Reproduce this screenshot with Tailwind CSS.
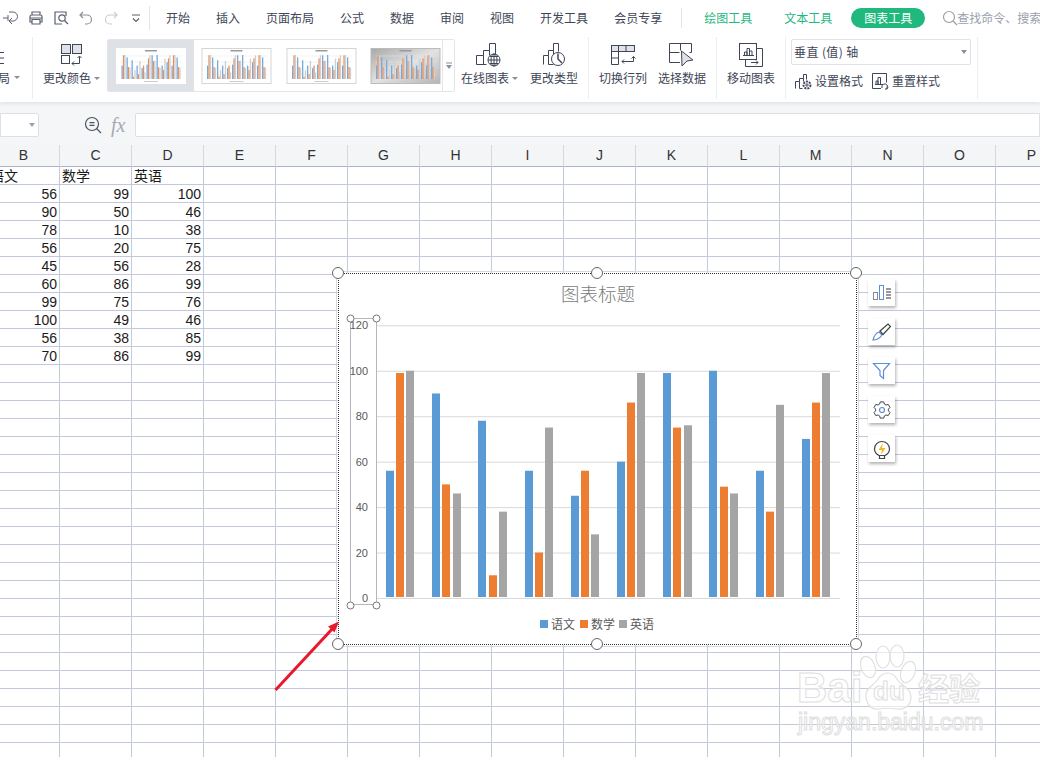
<!DOCTYPE html>
<html lang="zh-CN">
<head>
    <meta charset="UTF-8">
    <title>表格图表工具</title>
    <script src="https://cdn.jsdelivr.net/npm/@tailwindcss/browser@4"></script>
</head>
<body class="relative w-[1040px] h-[757px] overflow-hidden bg-white text-[#3e4657] font-['Noto_Sans_CJK_SC','Noto_Sans',sans-serif]">

    <!-- Tab row -->
    <div class="h-[35px] flex items-center pl-[3px] text-[12px] bg-white whitespace-nowrap">
        <div class="flex gap-[9px] items-center shrink-0">
            <svg class="w-[16px] h-[16px]" viewBox="0 0 16 16" fill="none" stroke="#5a6070"><path d="M6 2h4a4 4 0 0 1 0 9H7M9 8l-3 3 3 3M0 8h5M5 5v6"/></svg>
            <svg class="w-[16px] h-[16px]" viewBox="0 0 16 16" fill="none" stroke="#5a6070" stroke-width="1.2"><path d="M4 5V2h8v3M4 12H2V6.500A1.500 1.500 0 0 1 3.500 5h9A1.500 1.500 0 0 1 14 6.500V12h-2M4 9.500h8V14H4zM2 8h12"/></svg>
            <svg class="w-[16px] h-[16px]" viewBox="0 0 16 16" fill="none" stroke="#5a6070" stroke-width="1.2"><path d="M13 6V2H2v12h7"/><circle cx="9" cy="8" r="3.2"/><path d="M11.500 10.500 15 14"/></svg>
            <svg class="w-[16px] h-[16px]" viewBox="0 0 16 16" fill="none" stroke="#8a8f9a" stroke-width="1.2"><path d="M5 2 2 5l3 3M2 5h7a4 4 0 0 1 0 9H7"/></svg>
            <svg class="w-[16px] h-[16px]" viewBox="0 0 16 16" fill="none" stroke="#c8cbd2" stroke-width="1.2"><path d="m11 2 3 3-3 3M14 5H7a4 4 0 0 0 0 9h2"/></svg>
            <svg class="w-[16px] h-[16px]" viewBox="0 0 16 16" fill="none" stroke="#5a6070" stroke-width="1.2"><path d="M4 5h8M5 8.500l3 3 3-3"/></svg>
        </div>
        <div class="ml-[5px] w-px h-[24px] bg-[#e2e4e8] shrink-0"></div>
        <div class="ml-[16px] flex gap-[26px] text-[#3e4657] shrink-0">
            <span>开始</span><span>插入</span><span>页面布局</span><span>公式</span><span>数据</span><span>审阅</span><span>视图</span><span>开发工具</span><span>会员专享</span>
        </div>
        <div class="ml-[19px] w-px h-[20px] bg-[#e2e4e8] shrink-0"></div>
        <span class="ml-[22px] text-[#1fb97e] shrink-0">绘图工具</span>
        <span class="ml-[32px] text-[#1fb97e] shrink-0">文本工具</span>
        <span class="ml-[19px] w-[74px] h-[20px] rounded-full bg-[#1fb97e] text-white flex items-center justify-center shrink-0">图表工具</span>
        <svg class="ml-[17px] w-[16px] h-[16px] shrink-0" viewBox="0 0 16 16" fill="none" stroke="#9aa0ac" stroke-width="1.2"><circle cx="7" cy="7" r="5.500"/><path d="m11 11 4 4"/></svg>
        <span class="ml-[-1px] text-[#9aa0ac]">查找命令、搜索</span>
    </div>

    <!-- Ribbon -->
    <div class="relative z-10 h-[67px] flex bg-white text-[12px] shadow-[0_2px_4px_rgba(0,0,0,0.08)] whitespace-nowrap">
        <div class="w-[33px] relative border-r border-[#eceef1] mt-[2px] h-[62px]">
            <svg class="absolute left-0 top-[15px] w-[4px] h-[12px]" viewBox="0 0 4 12" stroke="#3e4657"><path d="M0 .5h4M0 6h4M0 11.500h4"/></svg>
            <span class="absolute left-[-2px] top-[33px] leading-[16px]">局</span>
            <span class="absolute left-[14px] top-[39px] border-x-[3px] border-x-transparent border-t-[3px] border-t-[#8a8f9a]"></span>
        </div>

        <div class="ml-[10px] w-[48px] pt-[5px] flex flex-col items-center relative">
            <svg class="w-[28px] h-[28px] translate-x-[4px]" viewBox="0 0 28 28" fill="none" stroke="#3e4657"><rect x="4.500" y="4.500" width="9" height="9" fill="#dfe2e7"/><rect x="15.500" y="4.500" width="9" height="9" fill="#dfe2e7"/><rect x="4.500" y="15.500" width="8" height="8"/><path d="M15 23.500h7.500v-7M20.500 18l2-2 2 2M15 23.500l2-2M15 23.500l2 2"/></svg>
            <span class="mt-[2px] leading-[16px]">更改颜色</span>
            <span class="absolute left-[51px] top-[42px] border-x-[3px] border-x-transparent border-t-[3px] border-t-[#8a8f9a]"></span>
        </div>

        <!-- Style gallery -->
        <div class="ml-[16px] mt-[4px] w-[348px] h-[53px] flex border border-[#e3e5e9] rounded-[2px]">
            <div class="w-[86px] bg-[#dee1e5] flex items-center justify-center"><svg data-thumb="0" class="w-[70px] h-[36px]" viewBox="0 0 70 36"></svg></div>
            <div class="w-[85px] flex items-center justify-center"><svg data-thumb="1" class="w-[71px] h-[36px]" viewBox="0 0 70 36"></svg></div>
            <div class="w-[85px] flex items-center justify-center"><svg data-thumb="2" class="w-[71px] h-[36px]" viewBox="0 0 70 36"></svg></div>
            <div class="w-[78px] flex items-center pl-[6px]"><svg data-thumb="3" class="w-[71px] h-[36px]" viewBox="0 0 70 36"></svg></div>
            <div class="flex-1 border-l border-[#e3e5e9] flex items-center justify-center">
                <svg class="w-[8px] h-[8px]" viewBox="0 0 8 8"><path d="M1 1h6" stroke="#8a8f9a"/><path d="M1 3h6L4 7z" fill="#8a8f9a"/></svg>
            </div>
        </div>

        <div class="ml-[6px] w-[48px] pt-[5px] flex flex-col items-center relative">
            <svg class="w-[28px] h-[28px] translate-x-[3px]" viewBox="0 0 28 28" fill="none" stroke="#3e4657"><path d="M2.500 24.500v-9h7v9M9.500 15.500v-5h6v5M15.500 10.500v-7h6v12"/><path d="M2.500 24.500h10"/><circle cx="20" cy="20" r="6" fill="#fff"/><path d="M14 20h12M20 14v12M16 16.500h8M16 23.500h8"/><ellipse cx="20" cy="20" rx="3" ry="6"/></svg>
            <span class="mt-[2px] leading-[16px]">在线图表</span>
            <span class="absolute left-[51px] top-[42px] border-x-[3px] border-x-transparent border-t-[3px] border-t-[#8a8f9a]"></span>
        </div>
        <div class="ml-[21px] w-[48px] pt-[5px] flex flex-col items-center">
            <svg class="w-[28px] h-[28px]" viewBox="0 0 28 28" fill="none" stroke="#3e4657"><path d="M3.500 24.500v-9h5v9h5M8.500 15.500v-5h5v5M13.500 10.500v-7h5v8"/><circle cx="18" cy="19" r="6.500" fill="#fff"/><path d="M18 13.500V19l4 4" stroke-width="1.500"/></svg>
            <span class="mt-[2px] leading-[16px]">更改类型</span>
        </div>
        <div class="ml-[10px] mt-[2px] w-px h-[62px] bg-[#eceef1]"></div>

        <div class="ml-[10px] w-[48px] pt-[5px] flex flex-col items-center">
            <svg class="w-[28px] h-[28px]" viewBox="0 0 28 28" fill="none" stroke="#3e4657"><rect x="2.500" y="5.500" width="23" height="6" fill="#dfe2e7"/><path d="M2.500 5.500v19h7v-19M2.500 11.500h7M2.500 18h7M17 5.500v6M25.500 11.500v-6"/><path d="M13 21.500h11.500v-5M22.500 18.500l2-2 2 2M13 21.500l2-2M13 21.500l2 2"/></svg>
            <span class="mt-[2px] leading-[16px]">切换行列</span>
        </div>
        <div class="ml-[11px] w-[48px] pt-[5px] flex flex-col items-center">
            <svg class="w-[28px] h-[28px]" viewBox="0 0 28 28" fill="none" stroke="#3e4657"><path d="M12 22.500H1.500v-19h22v9M1.500 12.500h10M12.500 3.500v7M23.500 12.500h-2"/><path d="m13.500 11 11.500 9-6 1-5 5z" fill="#dfe2e7"/></svg>
            <span class="mt-[2px] leading-[16px]">选择数据</span>
        </div>
        <div class="ml-[10px] mt-[2px] w-px h-[62px] bg-[#eceef1]"></div>

        <div class="ml-[10px] w-[48px] pt-[5px] flex flex-col items-center">
            <svg class="w-[28px] h-[28px]" viewBox="0 0 28 28" fill="none" stroke="#3e4657"><rect x="2.500" y="3.500" width="17" height="16"/><path d="M19.500 8.500h6v18h-17v-7"/><path d="M6 15.500h11M7.500 15v-3h2.500v3M10 15V8.500h2.500V15M12.500 15v-4H15v4"/><path d="M14 22.500h7M19 20.500l2 2-2 2"/></svg>
            <span class="mt-[2px] leading-[16px]">移动图表</span>
        </div>
        <div class="ml-[10px] mt-[2px] w-px h-[62px] bg-[#eceef1]"></div>

        <div class="ml-[5px] w-[180px] pt-[4px] flex flex-col">
            <div class="h-[26px] border border-[#dfe2e7] rounded-[2px] flex items-center pl-[2px] pr-[3px] justify-between text-[#3e4657]">
                <span class="tracking-[0.4px]">垂直 (值) 轴</span>
                <span class="border-x-[3px] border-x-transparent border-t-[4px] border-t-[#8a8f9a]"></span>
            </div>
            <div class="mt-[8px] flex items-center h-[16px] pl-[3px]">
                <svg class="w-[18px] h-[18px] shrink-0" viewBox="0 0 18 18" fill="none" stroke="#3e4657"><path d="M1.500 16.500v-7h4v7h3M5.500 9.500v-3h4v3M9.500 6.500v-4h3v5"/><circle cx="13" cy="13" r="3.500" stroke-width="2" stroke-dasharray="2 1"/><circle cx="13" cy="13" r="1.200"/></svg>
                <span class="ml-[3px]">设置格式</span>
                <svg class="ml-[8px] w-[18px] h-[18px] shrink-0" viewBox="0 0 18 18" fill="none" stroke="#3e4657"><path d="M10 16.500H1.500v-15h14v9"/><path d="M4 12.500h8M5 12V9h2v3M7 12V5.500h2.500V12"/><path d="M11 16a3 3 0 1 1 5 1M16 14.500V17h-2"/></svg>
                <span class="ml-[3px]">重置样式</span>
            </div>
        </div>
        <div class="ml-[6px] mt-[2px] w-px h-[62px] bg-[#eceef1]"></div>
    </div>

    <!-- Formula bar -->
    <div class="h-[43px] bg-[#f5f6f8] flex items-center pt-[3px]">
        <div class="w-[39px] h-[24px] bg-white border border-[#dcdfe5] rounded-r-[2px] flex items-center justify-end pr-[3px] shrink-0">
            <span class="border-x-[3px] border-x-transparent border-t-[4px] border-t-[#9aa0ac]"></span>
        </div>
        <svg class="ml-[45px] w-[18px] h-[18px] shrink-0" viewBox="0 0 18 18" fill="none" stroke="#4b5262" stroke-width="1.200"><circle cx="8" cy="8" r="6.500"/><path d="m12.500 12.500 4.500 4.500M5.500 6.700h5M5.500 9.300h5"/></svg>
        <span class="ml-[9px] w-[16px] text-[20px] leading-none font-['Liberation_Serif',serif] italic text-[#a5a9b3] shrink-0">fx</span>
        <div class="ml-[8px] flex-1 h-[24px] bg-white border border-[#dcdfe5] rounded-l-[2px]"></div>
    </div>

    <!-- Sheet, filled in below -->
    <div id="sheet" class="-ml-[12px] w-[1100px] font-['Liberation_Sans','Noto_Sans_CJK_SC',sans-serif] text-[14px] text-[#1a1a1a]"></div>

    <!-- Chart object -->
    <div class="absolute left-[338px] top-[273px] w-[519px] h-[372px] bg-white border border-dotted border-[#333] outline outline-1 outline-offset-[1px] outline-[#d6d8de]">
        <svg id="chart" class="w-full h-full" viewBox="339 274 517 370"></svg>
    </div>
    <!-- Selection handles -->
    <span class="absolute left-[332px] top-[267px] w-[12px] h-[12px] rounded-full bg-white border border-[#666]"></span>
    <span class="absolute left-[591px] top-[267px] w-[12px] h-[12px] rounded-full bg-white border border-[#666]"></span>
    <span class="absolute left-[850px] top-[267px] w-[12px] h-[12px] rounded-full bg-white border border-[#666]"></span>
    <span class="absolute left-[332px] top-[638px] w-[12px] h-[12px] rounded-full bg-white border border-[#666]"></span>
    <span class="absolute left-[591px] top-[638px] w-[12px] h-[12px] rounded-full bg-white border border-[#666]"></span>
    <span class="absolute left-[850px] top-[638px] w-[12px] h-[12px] rounded-full bg-white border border-[#666]"></span>

    <!-- Floating chart buttons -->
    <div class="absolute left-[868px] top-[279px] flex flex-col gap-[12px]">
        <div class="w-[27px] h-[27px] bg-white shadow-[1px_2px_3px_rgba(0,0,0,0.3)] flex items-center justify-center">
            <svg class="w-[20px] h-[20px]" viewBox="0 0 20 20" fill="none"><rect x="1.500" y="9.500" width="4" height="7" stroke="#8a8a8a"/><rect x="7.500" y="2.500" width="4" height="14" stroke="#5b8fd9"/><path d="M14 6h5M14 9h5M14 12h5M14 15h5" stroke="#333"/></svg>
        </div>
        <div class="w-[27px] h-[27px] bg-white shadow-[1px_2px_3px_rgba(0,0,0,0.3)] flex items-center justify-center">
            <svg class="w-[20px] h-[20px]" viewBox="0 0 20 20" fill="none"><path d="M1 18c1-4 3-7 6-8l3 3c-2 3-5 5-9 5z" stroke="#5b8fd9" stroke-width="1.200"/><path d="m8 9 8-7 2.500 2.500-7.500 8z" stroke="#444" stroke-width="1.200"/></svg>
        </div>
        <div class="w-[27px] h-[27px] bg-white shadow-[1px_2px_3px_rgba(0,0,0,0.3)] flex items-center justify-center">
            <svg class="w-[20px] h-[20px]" viewBox="0 0 20 20" fill="none"><path d="M1.500 2.500h16l-6 7v8l-3.500-3v-5z" stroke="#5b8fd9" stroke-width="1.200"/></svg>
        </div>
        <div class="w-[27px] h-[27px] bg-white shadow-[1px_2px_3px_rgba(0,0,0,0.3)] flex items-center justify-center">
            <svg class="w-[20px] h-[20px]" viewBox="0 0 20 20" fill="none"><path d="M8 0h4l.6 2.400 1.900 1.100 2.400-.7 2 3.400-1.800 1.800v2l1.800 1.800-2 3.400-2.400-.7-1.900 1.100L12 18H8l-.6-2.400-1.900-1.100-2.400.7-2-3.400 1.800-1.800v-2L1.100 6.200l2-3.400 2.400.7 1.900-1.100z" transform="translate(1 1.900) scale(.9)" stroke="#444" stroke-width="1.100"/><circle cx="10" cy="10" r="2.500" stroke="#5b8fd9" stroke-width="1.200"/></svg>
        </div>
        <div class="w-[27px] h-[27px] bg-white shadow-[1px_2px_3px_rgba(0,0,0,0.3)] flex items-center justify-center">
            <svg class="w-[20px] h-[20px]" viewBox="0 0 20 20" fill="none"><path d="M7 16.500C4 15 2.500 12.800 2.500 10a7.500 7.500 0 0 1 15 0c0 2.800-1.500 5-4.500 6.500z" stroke="#444" stroke-width="1.200"/><path d="M7.500 17v2.500h5V17" stroke="#444" stroke-width="1.200"/><path d="M11 4 6.500 11H10l-1 5 4.500-7H10z" fill="#f5b921"/></svg>
        </div>
    </div>

    <!-- Red arrow -->
    <svg class="absolute left-[270px] top-[615px] w-[75px] h-[80px]" viewBox="270 615 75 80" fill="none">
        <path d="M275.500 690 334 627" stroke="#e8192c" stroke-width="3"/>
        <path d="m339 621.500-11 5 6.500 6z" fill="#e8192c"/>
    </svg>

    <!-- Watermark -->
    <div class="absolute left-[796px] top-[640px] w-[200px] h-[100px] pointer-events-none">
        <svg class="absolute left-0 top-0 w-[200px] h-[100px]" viewBox="796 640 200 100" fill="#ffffff99" stroke="#e0e0e0" stroke-width="1.200">
            <ellipse cx="868" cy="667" rx="7" ry="11" transform="rotate(-20 868 667)"/>
            <ellipse cx="883" cy="657" rx="7" ry="11"/>
            <ellipse cx="897" cy="656" rx="7" ry="11"/>
            <ellipse cx="908" cy="672" rx="7" ry="11" transform="rotate(20 908 672)"/>
            <path d="M866 695c0-8 8-9 12-16 5-8 14-8 19 0 4 7 14 9 14 18 0 9-7 13-14 12-6-1-12-1-18 0-8 1-13-5-13-14z"/>
        </svg>
        <span class="absolute left-[1px] top-[28px] text-[42px] leading-[40px] font-bold font-['Liberation_Sans',sans-serif] text-white/50 [-webkit-text-stroke:1px_#dedede]">Bai</span>
        <span class="absolute left-[77px] top-[38px] text-[26px] leading-[26px] font-bold font-['Liberation_Sans',sans-serif] text-white/50 [-webkit-text-stroke:1px_#dedede]">du</span>
        <span class="absolute left-[122px] top-[27px] text-[31px] leading-[40px] font-bold text-white/50 [-webkit-text-stroke:1px_#dedede]">经验</span>
        <span class="absolute left-[2px] top-[69px] text-[23px] leading-[26px] font-['Liberation_Sans',sans-serif] text-white/50 [-webkit-text-stroke:1px_#dedede]">jingyan.baidu.com</span>
    </div>

    <script>
        // Sheet data, one row per line of the table
        const rows = [
            [56, 99, 100], [90, 50, 46], [78, 10, 38], [56, 20, 75], [45, 56, 28],
            [60, 86, 99], [99, 75, 76], [100, 49, 46], [56, 38, 85], [70, 86, 99]
        ];
        const columns = 'ABCDEFGHIJKLMNOP'.split('').slice(1);
        const headerCell = 'w-[72px] h-[22px] shrink-0 bg-[#f4f5f7] border-r border-b border-r-[#d5d8e0] border-b-[#aeb4c8] flex items-center justify-center text-[#333]';
        const bodyCell = 'w-[72px] h-[18px] shrink-0 border-r border-b border-[#c3c9da] leading-[19px] px-[2px] overflow-visible whitespace-nowrap';

        function buildSheet() {
            const sheet = document.getElementById('sheet');
            let html = '<div class="flex">';
            columns.forEach(c => { html += `<div class="${headerCell}">${c}</div>`; });
            html += '</div>';
            for (let r = 0; r < 33; r++) {
                html += '<div class="flex">';
                columns.forEach((c, i) => {
                    let text = '', align = '';
                    if (r === 0 && i < 3) text = ['语文', '数学', '英语'][i];
                    if (r > 0 && r <= rows.length && i < 3) { text = rows[r - 1][i]; align = ' text-right'; }
                    html += `<div class="${bodyCell}${align}">${text}</div>`;
                });
                html += '</div>';
            }
            sheet.innerHTML = html;
        }

        function buildChart() {
            const y = v => 598 - v * 2.2725;
            let s = '<text x="598" y="301" text-anchor="middle" font-size="18.500" font-weight="300" fill="#7a7a7a">图表标题</text>';
            for (let v = 20; v <= 120; v += 20) {
                s += `<line x1="377" x2="840" y1="${y(v) + 0.5}" y2="${y(v) + 0.5}" stroke="#d9d9d9"/>`;
            }
            s += '<line x1="377" x2="840" y1="598.5" y2="598.5" stroke="#d9d9d9"/>';
            const fill = ['#5b9bd5', '#ed7d31', '#a5a5a5'];
            const offset = [0, 10.2, 20.3];
            rows.forEach((row, i) => {
                row.forEach((v, k) => {
                    const top = y(v);
                    s += `<rect x="${Math.round(386 + 46.2 * i + offset[k])}" y="${top}" width="8" height="${597 - top}" fill="${fill[k]}"/>`;
                });
            });
            // axis selection frame
            s += '<rect x="350.500" y="318.500" width="26" height="286" fill="none" stroke="#b4b7c0"/>';
            for (let v = 0; v <= 120; v += 20) {
                s += `<text x="368" y="${y(v) + 4}" text-anchor="end" font-size="11" fill="#595959" font-family="Liberation Sans">${v}</text>`;
            }
            [[350, 318], [376, 318], [350, 605], [376, 605]].forEach(p => {
                s += `<circle cx="${p[0] + 0.5}" cy="${p[1] + 0.5}" r="3.500" fill="#fff" stroke="#777"/>`;
            });
            // legend
            [[540, '语文', 0], [580, '数学', 1], [619, '英语', 2]].forEach(l => {
                s += `<rect x="${l[0]}" y="620" width="8" height="8" fill="${fill[l[2]]}"/>`;
                s += `<text x="${l[0] + 11}" y="628.500" font-size="12" fill="#595959">${l[1]}</text>`;
            });
            document.getElementById('chart').innerHTML = s;
        }

        // Tiny previews in the style gallery
        function buildThumbs() {
            document.querySelectorAll('[data-thumb]').forEach(svg => {
                const t = Number(svg.dataset.thumb);
                let s = '<defs><linearGradient id="thumbGrey" x1="0" x2="1" y1="0" y2="1"><stop offset="0" stop-color="#a8a8a8"/><stop offset=".5" stop-color="#e2e2e2"/><stop offset="1" stop-color="#b5b5b5"/></linearGradient></defs>';
                s += `<rect x=".5" y=".5" width="69" height="35" fill="${t === 3 ? 'url(#thumbGrey)' : '#fff'}" stroke="${t === 0 ? '#fff' : t === 3 ? '#bbb' : '#d5d5d5'}"/>`;
                s += '<rect x="29" y="2" width="12" height="1.500" fill="#999"/>';
                for (let g = 0; g < 4; g++) s += `<line x1="5" x2="66" y1="${8 + g * 6}" y2="${8 + g * 6}" stroke="#e6e6e6" stroke-width=".5"/>`;
                rows.concat(rows.slice(0, 2)).forEach((row, i) => {
                    row.forEach((v, k) => {
                        const h = v * 0.24;
                        s += `<rect x="${5.500 + i * 5 + k * 1.400}" y="${31 - h}" width="1.300" height="${h}" fill="${['#78aadb', '#e8905a', '#cfcfcf'][k]}"/>`;
                    });
                });
                s += '<rect x="28" y="33" width="14" height="1" fill="#ccc"/>';
                svg.innerHTML = s;
            });
        }

        buildSheet();
        buildChart();
        buildThumbs();
    </script>
</body>
</html>
